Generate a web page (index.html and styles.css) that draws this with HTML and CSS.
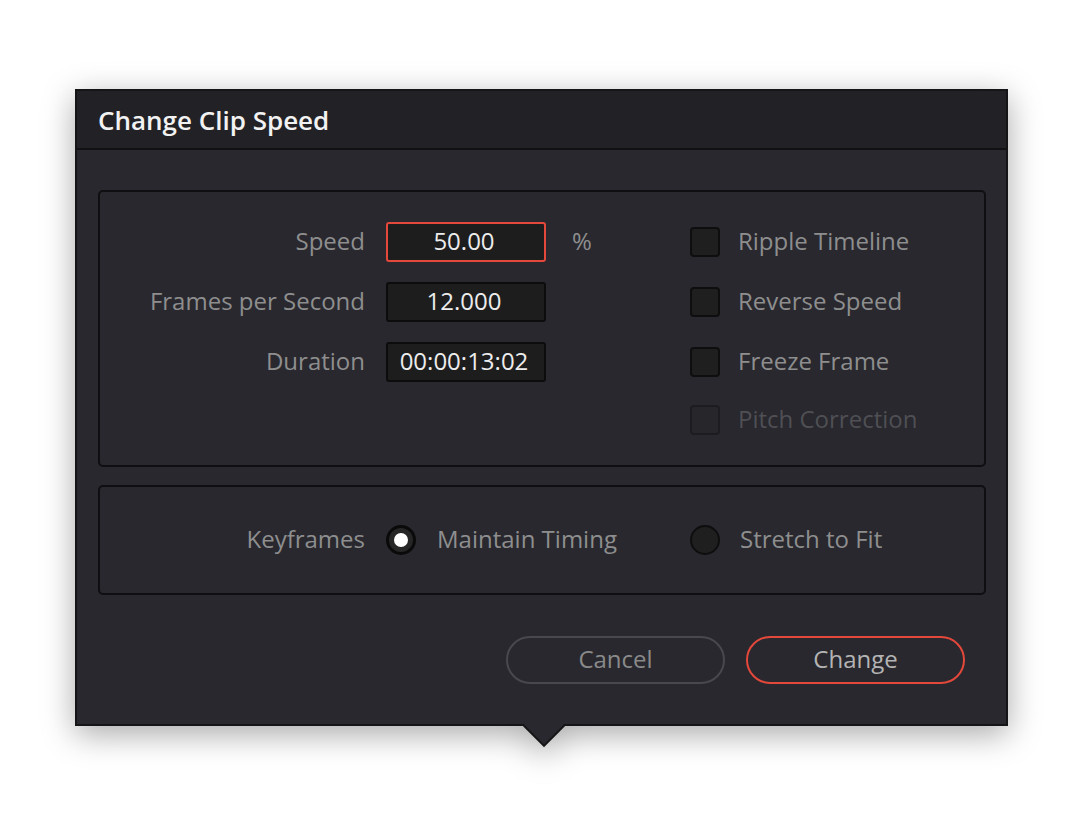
FILE: index.html
```html
<!DOCTYPE html>
<html>
<head>
<meta charset="utf-8">
<link rel="stylesheet" href="styles.css">
</head>
<body>
<div class="dialog">
  <div class="titlebar">Change Clip Speed</div>
  <div class="content">
    <div class="group group-speed">
      <div class="label r1">Speed</div>
      <div class="field field-active r1">50.00</div>
      <div class="unit r1">%</div>

      <div class="label r2">Frames per Second</div>
      <div class="field r2">12.000</div>

      <div class="label r3">Duration</div>
      <div class="field r3">00:00:13:02</div>

      <div class="check r1"><span class="box"></span><span class="txt">Ripple Timeline</span></div>
      <div class="check r2"><span class="box"></span><span class="txt">Reverse Speed</span></div>
      <div class="check r3"><span class="box"></span><span class="txt">Freeze Frame</span></div>
      <div class="check r4 disabled"><span class="box"></span><span class="txt">Pitch Correction</span></div>
    </div>
    <div class="group group-keys">
      <div class="label">Keyframes</div>
      <div class="radio-opt"><span class="radio selected"></span><span class="txt">Maintain Timing</span></div>
      <div class="radio-opt opt2"><span class="radio"></span><span class="txt">Stretch to Fit</span></div>
    </div>
    <div class="buttons">
      <button class="btn">Cancel</button>
      <button class="btn btn-primary">Change</button>
    </div>
  </div>
  <div class="pointer"></div>
</div>
</body>
</html>
```
FILE: styles.css
```css
html, body {
  margin: 0;
  padding: 0;
  background: #ffffff;
}
body {
  font-family: "Open Sans", "Liberation Sans", sans-serif;
  width: 1084px;
  height: 832px;
  overflow: hidden;
}
.dialog {
  position: relative;
  box-sizing: border-box;
  margin: 89px 0 0 75px;
  width: 933px;
  height: 637px;
  background: #28282e;
  border: 2px solid #151517;
  filter: drop-shadow(0 8px 16px rgba(0, 0, 0, 0.34));
}
.titlebar {
  box-sizing: border-box;
  height: 59px;
  background: #222226;
  border-bottom: 2px solid #111113;
  padding: 0 0 0 21px;
  display: flex;
  align-items: center;
  color: #f2f2f2;
  font-size: 26px;
  font-weight: 600;
}
.content {
  padding: 40px 20px 0 21px;
}
.group {
  box-sizing: border-box;
  border: 2px solid #0f0f11;
  border-radius: 5px;
  display: grid;
  grid-template-columns: 286px 160px 144px 1fr;
  color: #8e8e8e;
  font-size: 24px;
}
.group-speed {
  height: 277px;
  padding-top: 30px;
  grid-template-rows: 40px 40px 40px 36px;
  row-gap: 20px;
  align-content: start;
}
.group-keys {
  margin-top: 18px;
  height: 110px;
  align-items: center;
}
.label {
  grid-column: 1;
  text-align: right;
  padding-right: 21px;
  padding-bottom: 3px;
  align-self: center;
}
.r1 { grid-row: 1; }
.r2 { grid-row: 2; }
.r3 { grid-row: 3; }
.r4 { grid-row: 4; }
.field {
  grid-column: 2;
  box-sizing: border-box;
  height: 40px;
  background: #1d1d1e;
  border: 2px solid #0c0c0d;
  border-radius: 3px;
  color: #ececec;
  display: flex;
  align-items: center;
  justify-content: center;
  padding: 0 4px 3px 0;
}
.field-active {
  border-color: #e3483b;
}
.unit {
  grid-column: 3;
  align-self: center;
  padding-left: 26px;
  padding-bottom: 3px;
}
.check {
  grid-column: 4;
  display: flex;
  align-items: center;
  gap: 18px;
}
.txt {
  padding-bottom: 3px;
}
.box {
  box-sizing: border-box;
  width: 30px;
  height: 30px;
  background: #1f1f20;
  border: 2px solid #0e0e0f;
  border-radius: 4px;
  flex: none;
}
.check.disabled {
  color: #4f4f54;
}
.check.disabled .box {
  background: #26262b;
  border-color: #1d1d21;
}
.radio-opt {
  grid-column: 2 / span 2;
  display: flex;
  align-items: center;
  gap: 21px;
}
.radio-opt.opt2 {
  grid-column: 4;
  gap: 20px;
}
.radio {
  box-sizing: border-box;
  width: 30px;
  height: 30px;
  border-radius: 50%;
  background: #1f1f20;
  border: 2px solid #0e0e0f;
  flex: none;
  display: flex;
  align-items: center;
  justify-content: center;
}
.radio.selected {
  border: 3px solid #0a0a0a;
  background: #262626;
}
.radio.selected::after {
  content: "";
  width: 14px;
  height: 14px;
  border-radius: 50%;
  background: #ffffff;
}
.buttons {
  display: flex;
  justify-content: flex-end;
  gap: 21px;
  margin-top: 41px;
  padding-right: 21px;
}
.btn {
  box-sizing: border-box;
  width: 219px;
  height: 48px;
  border-radius: 24px;
  border: 2px solid #48484e;
  background: transparent;
  color: #8a8a8a;
  font-family: "Open Sans", "Liberation Sans", sans-serif;
  font-size: 24px;
  padding: 0 0 3px 0;
}
.btn-primary {
  border-color: #e3483b;
  color: #b4b4b4;
}
.pointer {
  position: absolute;
  left: 452px;
  bottom: -17px;
  width: 30px;
  height: 30px;
  box-sizing: border-box;
  background: #28282e;
  border-right: 2px solid #151517;
  border-bottom: 2px solid #151517;
  transform: rotate(45deg);
}
```
